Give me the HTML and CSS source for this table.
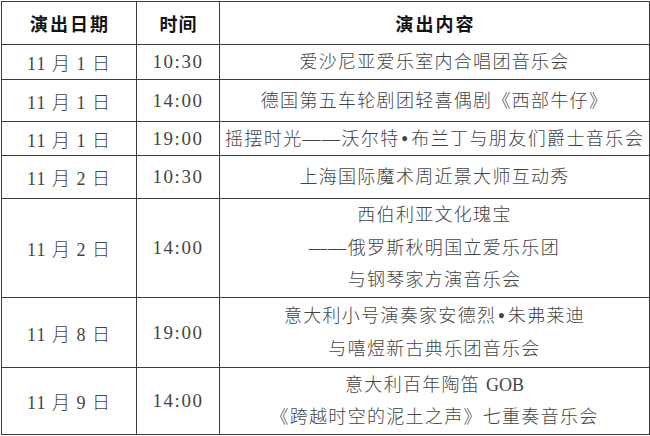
FILE: index.html
```html
<!DOCTYPE html>
<html lang="zh-CN">
<head>
<meta charset="utf-8">
<title>演出安排</title>
<link rel="stylesheet" href="styles.css">
</head>
<body>
<table class="schedule">
  <colgroup>
    <col class="c-date">
    <col class="c-time">
    <col class="c-show">
  </colgroup>
  <thead>
    <tr class="h-head">
      <th>演出日期</th>
      <th class="th-time">时间</th>
      <th>演出内容</th>
    </tr>
  </thead>
  <tbody>
    <tr class="h-35">
      <td class="date">11 月 1 日</td>
      <td class="time">10:30</td>
      <td class="show">爱沙尼亚爱乐室内合唱团音乐会</td>
    </tr>
    <tr class="h-42">
      <td class="date">11 月 1 日</td>
      <td class="time">14:00</td>
      <td class="show">德国第五车轮剧团轻喜偶剧《西部牛仔》</td>
    </tr>
    <tr class="h-34">
      <td class="date">11 月 1 日</td>
      <td class="time">19:00</td>
      <td class="show show-wide">摇摆时光——沃尔特<span class="dot">•</span>布兰丁与朋友们爵士音乐会</td>
    </tr>
    <tr class="h-43">
      <td class="date">11 月 2 日</td>
      <td class="time">10:30</td>
      <td class="show">上海国际魔术周近景大师互动秀</td>
    </tr>
    <tr class="h-99">
      <td class="date">11 月 2 日</td>
      <td class="time">14:00</td>
      <td class="show multi">西伯利亚文化瑰宝<br>——俄罗斯秋明国立爱乐乐团<br>与钢琴家方演音乐会</td>
    </tr>
    <tr class="h-70">
      <td class="date">11 月 8 日</td>
      <td class="time">19:00</td>
      <td class="show multi">意大利小号演奏家安德烈<span class="dot">•</span>朱弗莱迪<br>与嘻煜新古典乐团音乐会</td>
    </tr>
    <tr class="h-67">
      <td class="date">11 月 9 日</td>
      <td class="time">14:00</td>
      <td class="show multi">意大利百年陶笛 <span class="latin">GOB</span><br>《跨越时空的泥土之声》七重奏音乐会</td>
    </tr>
  </tbody>
</table>
</body>
</html>
```

FILE: styles.css
```css
html, body {
  margin: 0;
  padding: 0;
  background: #ffffff;
}

body {
  padding: 1px 0 0 1px;
}

.schedule {
  border-collapse: collapse;
  table-layout: fixed;
  width: 648px;
  color: #444444;
  font-family: "Liberation Serif", "Noto Sans CJK SC", serif;
  font-size: 18px;
  font-weight: 300;
}

.c-date { width: 135px; }
.c-time { width: 83px; }
.c-show { width: 430px; }

.schedule th,
.schedule td {
  border: 1px solid #3c3c3c;
  padding: 0;
  text-align: center;
  vertical-align: middle;
  white-space: nowrap;
}

.schedule th {
  font-family: "Noto Sans CJK SC", sans-serif;
  font-weight: 700;
  font-size: 18px;
  color: #141414;
  letter-spacing: 2px;
  padding-left: 2px;
}

.schedule .th-time {
  letter-spacing: 1px;
  padding-left: 1px;
}

.h-head { height: 43px; }
.h-35 { height: 35px; }
.h-42 { height: 42px; }
.h-34 { height: 34px; }
.h-43 { height: 43px; }
.h-99 { height: 99px; }
.h-70 { height: 70px; }
.h-67 { height: 67px; }

.date {
  letter-spacing: 1px;
  padding-left: 1px;
}

.time {
  font-size: 19px;
  letter-spacing: 1.5px;
  padding-left: 1.5px;
}

.show {
  letter-spacing: 1.3px;
  padding-left: 1.3px;
  line-height: 24px;
}

.show-wide {
  letter-spacing: 1.4px;
  padding-left: 0;
}

.multi {
  line-height: 32.5px;
}

.dot {
  font-weight: 700;
  padding: 0 2px;
}

.latin {
  font-family: "Liberation Serif", serif;
  letter-spacing: 0;
}
```
